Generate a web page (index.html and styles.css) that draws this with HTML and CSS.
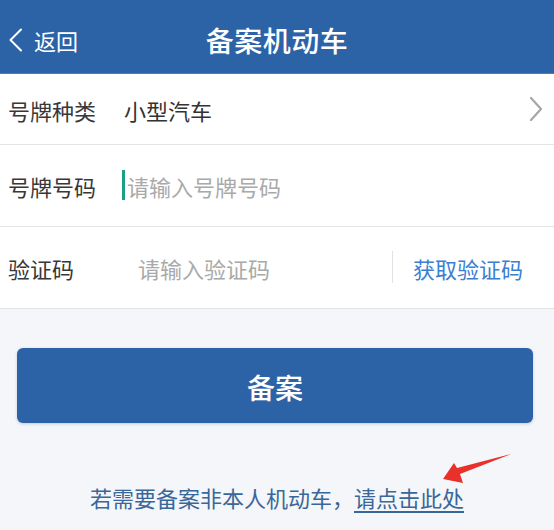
FILE: index.html
```html
<!DOCTYPE html>
<html lang="zh-CN">
<head>
<meta charset="utf-8">
<title>备案机动车</title>
<link rel="stylesheet" href="styles.css">
</head>
<body>
<div class="page">
  <header class="topbar">
    <div class="back">
      <svg class="back-icon" width="16" height="24" viewBox="0 0 16 24"><polyline points="13,1.5 2.5,12 13,22.5" fill="none" stroke="#fff" stroke-width="2" stroke-linecap="round" stroke-linejoin="round"/></svg>
      <span class="back-text">返回</span>
    </div>
    <h1 class="title">备案机动车</h1>
    <div class="spacer"></div>
  </header>

  <section class="form">
    <div class="row row-first">
      <span class="label">号牌种类</span>
      <span class="value">小型汽车</span>
      <svg class="chev" width="16" height="26" viewBox="0 0 16 26"><polyline points="3,2 13,13 3,24" fill="none" stroke="#a6a6a6" stroke-width="2.2" stroke-linecap="round" stroke-linejoin="round"/></svg>
    </div>
    <div class="row">
      <span class="label">号牌号码</span>
      <span class="field"><span class="caret"></span><span class="ph">请输入号牌号码</span></span>
    </div>
    <div class="row">
      <span class="label label-short">验证码</span>
      <span class="ph ph-code">请输入验证码</span>
      <span class="divider"></span>
      <span class="getcode">获取验证码</span>
    </div>
  </section>

  <div class="actions">
    <button class="submit">备案</button>
  </div>

  <p class="note">若需要备案非本人机动车，<span class="link">请点击此处</span></p>

  <svg class="arrow" width="554" height="530" viewBox="0 0 554 530">
    <polygon points="443,479 454,463 457,468 511,454 460,474 463,483" fill="#e9302b"/>
  </svg>
</div>
</body>
</html>
```

FILE: styles.css
```css
* { box-sizing: border-box; }
html, body {
  margin: 0;
  padding: 0;
  background: #f4f6f9;
  font-family: "Noto Sans CJK SC", "Noto Sans", sans-serif;
}
.page {
  position: relative;
  width: 554px;
  height: 530px;
  overflow: hidden;
}
.topbar {
  height: 74px;
  background: #2c63a7;
  border-bottom: 1px solid #4a7dbb;
  display: grid;
  grid-template-columns: 1fr auto 1fr;
  align-items: center;
  padding: 6px 0 0 8px;
  color: #fff;
}
.back {
  display: flex;
  align-items: center;
  gap: 10px;
}
.back-icon { display: block; }
.back-text {
  font-size: 22px;
  line-height: 1;
}
.title {
  margin: 0;
  font-size: 28px;
  font-weight: 500;
  line-height: 1;
  letter-spacing: 0.5px;
  transform: translateX(-4px);
}
.form {
  background: #fff;
}
.row {
  height: 82px;
  border-bottom: 1px solid #e3e4e6;
  display: flex;
  align-items: center;
  padding: 1px 0 0 8px;
  font-size: 22px;
  line-height: 1;
  color: #333;
}
.row-first {
  height: 71px;
}
.label {
  width: 116px;
  flex: none;
  color: #383838;
}
.label-short {
  width: 130px;
}
.value {
  flex: 1;
  color: #333;
}
.chev {
  margin-right: 10px;
  margin-top: -2px;
}
.field {
  display: flex;
  align-items: center;
  margin-left: -2px;
}
.caret {
  width: 3px;
  height: 30px;
  background: #1c9f86;
  margin-right: 2px;
  margin-top: -2px;
}
.ph {
  color: #a9a9a9;
}
.ph-code {
  flex: 1;
}
.divider {
  width: 1px;
  height: 32px;
  background: #e2e2e2;
  margin-right: 20px;
  margin-top: -2px;
}
.getcode {
  color: #3b7fd1;
  margin-right: 31px;
}
.actions {
  padding: 39px 21px 0 17px;
}
.submit {
  display: block;
  width: 100%;
  height: 75px;
  border: none;
  border-radius: 6px;
  background: #2c63a7;
  box-shadow: 0 1px 3px rgba(40, 80, 130, 0.25);
  color: #fff;
  font-family: inherit;
  font-size: 28px;
  font-weight: 500;
  line-height: 1;
  padding-top: 3px;
}
.note {
  margin: 58px 0 0;
  text-align: center;
  font-size: 22px;
  font-weight: 400;
  line-height: 32px;
  color: #3a6799;
}
.link {
  text-decoration: underline;
  text-underline-offset: 4px;
  text-decoration-thickness: 1.5px;
}
.arrow {
  position: absolute;
  left: 0;
  top: 0;
  pointer-events: none;
}
```
